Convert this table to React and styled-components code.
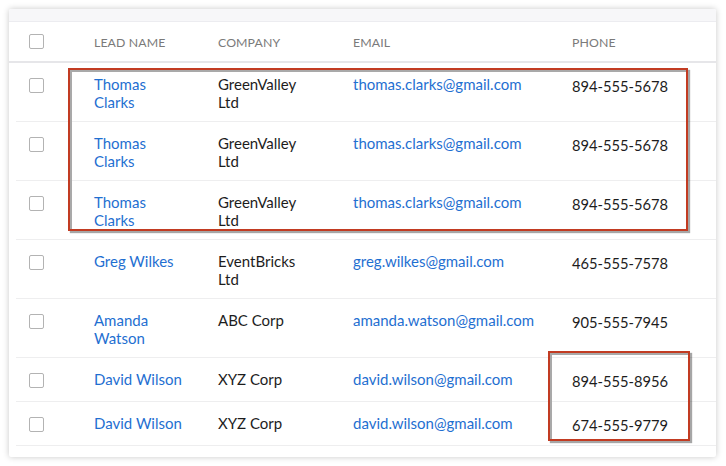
import React from "react";
import styled, { createGlobalStyle } from "styled-components";

const Global = createGlobalStyle`
  html, body { margin: 0; padding: 0; background: #ffffff; }
  body { font-family: "Lato", "Open Sans", "Liberation Sans", sans-serif; }
  * { box-sizing: border-box; }
`;

const Page = styled.div`
  position: relative;
  width: 726px;
  height: 466px;
  padding: 9px 10px 9px 9px;
  background: #ffffff;
`;

const Card = styled.div`
  background: #ffffff;
  border-radius: 2px;
  box-shadow: 0 0 6px rgba(0, 0, 0, 0.22);
  padding-bottom: 11px;
`;

const TopBand = styled.div`
  height: 13px;
  background: #f7f7f9;
  border-bottom: 1px solid #ececf0;
  border-radius: 2px 2px 0 0;
`;

const HeaderRow = styled.div`
  display: grid;
  grid-template-columns: 85px 124px 135px 219px 1fr;
  align-items: center;
  height: 41px;
  border-bottom: 2px solid #e6e6e9;
`;

const HeadCell = styled.div`
  font-size: 12.3px;
  color: #7a7a7a;
  letter-spacing: 0.1px;
  padding-top: 2px;
`;

const Row = styled.div`
  display: grid;
  grid-template-columns: 78px 124px 135px 219px 1fr;
  align-items: start;
  min-height: 44px;
  padding: 12px 0 10px;
  margin-left: 7px;
  border-bottom: 1px solid #eeeeef;
`;

const CheckCell = styled.div`
  padding-left: ${(p) => p.$pad}px;
  padding-top: ${(p) => p.$top || 0}px;
  display: flex;
`;

const Box = styled.span`
  display: block;
  width: 15px;
  height: 15px;
  border: 1px solid #b3b3b3;
  border-radius: 2px;
  background: #fff;
`;

const NameCell = styled.a`
  font-size: 15px;
  line-height: 18px;
  color: #1f6fd1;
  text-decoration: none;
  white-space: pre-line;
`;

const TextCell = styled.div`
  font-size: 15px;
  line-height: 18px;
  color: #1d1d1d;
  white-space: pre-line;
`;

const EmailCell = styled.a`
  font-size: 15px;
  line-height: 18px;
  color: #1f6fd1;
  text-decoration: none;
`;

const PhoneCell = styled.div`
  font-size: 14.7px;
  line-height: 18px;
  color: #1d1d1d;
  padding-top: 2px;
`;

const Highlight = styled.div`
  position: absolute;
  left: ${(p) => p.$x}px;
  top: ${(p) => p.$y}px;
  width: ${(p) => p.$w}px;
  height: ${(p) => p.$h}px;
  border: 2px solid #c23b22;
  box-shadow: inset 2px 2px 0 #a9a9a9, 2px 2px 1px rgba(0, 0, 0, 0.35);
  pointer-events: none;
`;

const leads = [
  ["Thomas\nClarks", "GreenValley\nLtd", "thomas.clarks@gmail.com", "894-555-5678"],
  ["Thomas\nClarks", "GreenValley\nLtd", "thomas.clarks@gmail.com", "894-555-5678"],
  ["Thomas\nClarks", "GreenValley\nLtd", "thomas.clarks@gmail.com", "894-555-5678"],
  ["Greg Wilkes", "EventBricks\nLtd", "greg.wilkes@gmail.com", "465-555-7578"],
  ["Amanda\nWatson", "ABC Corp", "amanda.watson@gmail.com", "905-555-7945"],
  ["David Wilson", "XYZ Corp", "david.wilson@gmail.com", "894-555-8956"],
  ["David Wilson", "XYZ Corp", "david.wilson@gmail.com", "674-555-9779"],
];

export default function App() {
  return (
    <>
      <Global />
      <Page>
        <Card>
          <TopBand />
          <HeaderRow>
            <CheckCell $pad={20}>
              <Box />
            </CheckCell>
            <HeadCell>LEAD NAME</HeadCell>
            <HeadCell>COMPANY</HeadCell>
            <HeadCell>EMAIL</HeadCell>
            <HeadCell>PHONE</HeadCell>
          </HeaderRow>
          {leads.map(([name, company, email, phone], i) => (
            <Row key={i}>
              <CheckCell $pad={13} $top={3}>
                <Box />
              </CheckCell>
              <NameCell href="#">{name}</NameCell>
              <TextCell>{company}</TextCell>
              <EmailCell href="#">{email}</EmailCell>
              <PhoneCell>{phone}</PhoneCell>
            </Row>
          ))}
        </Card>
        <Highlight $x={68} $y={68} $w={620} $h={163} />
        <Highlight $x={548} $y={351} $w={142} $h={90} />
      </Page>
    </>
  );
}
